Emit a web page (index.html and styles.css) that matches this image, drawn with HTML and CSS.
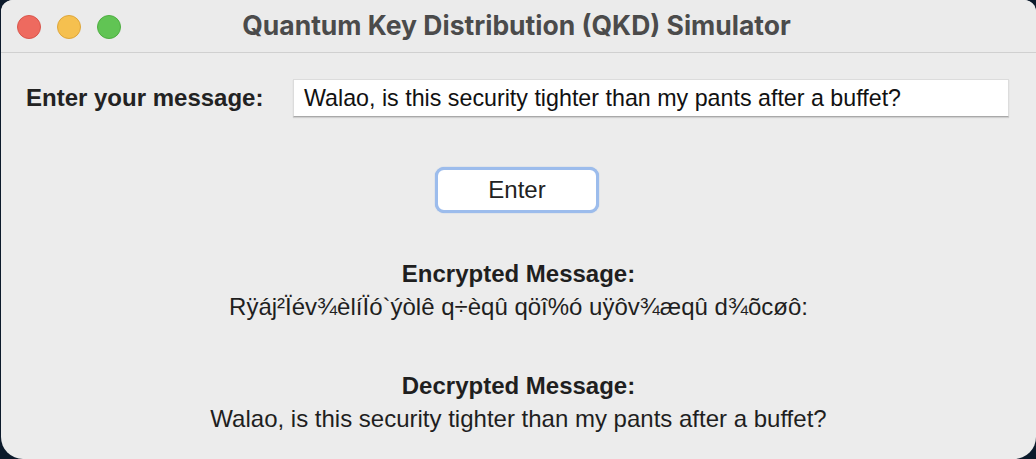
FILE: index.html
```html
<!DOCTYPE html>
<html>
<head>
<meta charset="utf-8">
<link rel="stylesheet" href="styles.css">
</head>
<body>
<div class="window">
  <div class="titlebar">
    <div class="lights">
      <span class="light red"></span>
      <span class="light yellow"></span>
      <span class="light green"></span>
    </div>
    <div class="title">Quantum Key Distribution (QKD) Simulator</div>
  </div>
  <div class="content">
    <div class="row">
      <label class="label">Enter your message:</label>
      <div class="input">Walao, is this security tighter than my pants after a buffet?</div>
    </div>
    <div class="btn-row">
      <button class="btn">Enter</button>
    </div>
    <div class="section enc">
      <div class="heading">Encrypted Message:</div>
      <div class="value">Rÿáj²Ïév¾èlíÏó`ýòlê q÷èqû qöî%ó uÿôv¾æqû d¾õcøô:</div>
    </div>
    <div class="section dec">
      <div class="heading">Decrypted Message:</div>
      <div class="value">Walao, is this security tighter than my pants after a buffet?</div>
    </div>
  </div>
</div>
</body>
</html>
```
FILE: styles.css
```css
html, body {
  margin: 0;
  padding: 0;
  width: 1036px;
  height: 459px;
  overflow: hidden;
  background: #0c1a2b;
}
.window {
  width: 1035px;
  height: 459px;
  margin-left: 1px;
  background: #ececec;
  border-radius: 12px 12px 22px 22px;
  overflow: hidden;
  display: flex;
  flex-direction: column;
  font-family: "Liberation Sans", Arial, sans-serif;
  color: #1f1f1f;
}
.titlebar {
  height: 52px;
  border-bottom: 1px solid #d0d0d0;
  background: #ebebeb;
  display: flex;
  align-items: center;
  position: relative;
  flex-shrink: 0;
}
.lights {
  display: flex;
  gap: 16px;
  padding-left: 16px;
  padding-top: 1px;
}
.light {
  width: 24px;
  height: 24px;
  border-radius: 50%;
  box-sizing: border-box;
}
.red { background: #ee6a5f; border: 1px solid #d9564c; }
.yellow { background: #f5c04f; border: 1px solid #dea63a; }
.green { background: #61c454; border: 1px solid #4eae41; }
.title {
  position: absolute;
  left: 0;
  right: 0;
  top: 0;
  height: 52px;
  line-height: 50px;
  text-align: center;
  font-family: "Inter", "Open Sans", sans-serif;
  font-weight: 700;
  font-size: 26.5px;
  color: #4b4b4b;
  padding-right: 4px;
}
.content {
  display: flex;
  flex-direction: column;
  padding: 0 25px;
}
.row {
  display: flex;
  align-items: center;
  margin-top: 26px;
  height: 38px;
}
.label {
  font-weight: 700;
  font-size: 24px;
  width: 267px;
  color: #222;
}
.input {
  width: 716px;
  height: 38px;
  box-sizing: border-box;
  background: #fff;
  border: 1px solid #dcdcdc;
  border-bottom: 1px solid #a9a9a9;
  box-shadow: 0 1px 1px rgba(0,0,0,0.12);
  font-size: 23.25px;
  line-height: 36px;
  padding-left: 10px;
  color: #111;
  white-space: nowrap;
}
.btn-row {
  display: flex;
  justify-content: center;
  margin-top: 50px;
}
.btn {
  width: 164px;
  height: 46px;
  margin-right: 3px;
  background: #fff;
  border: 3px solid #9cbcec;
  border-radius: 9px;
  box-shadow: 0 0 1px #7fa6e0;
  font-family: "Liberation Sans", Arial, sans-serif;
  font-size: 24px;
  color: #222;
  padding: 0;
}
.section {
  display: flex;
  flex-direction: column;
  align-items: center;
  font-size: 24px;
  white-space: nowrap;
}
.enc { margin-top: 48px; }
.dec { margin-top: 53px; }
.heading {
  font-weight: 700;
  line-height: 26px;
}
.value {
  line-height: 26px;
  margin-top: 7px;
}
```
